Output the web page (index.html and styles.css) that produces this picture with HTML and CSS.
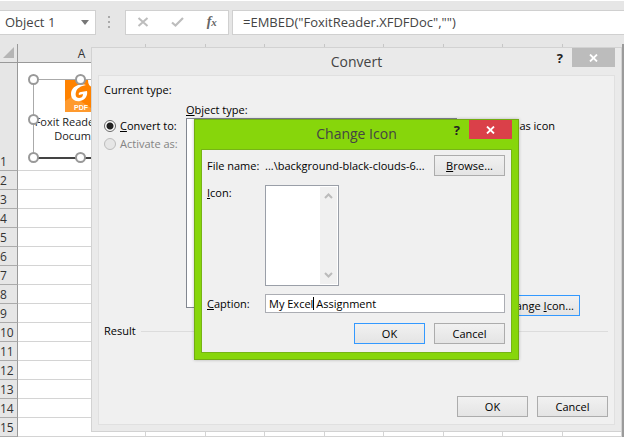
FILE: index.html
```html
<!DOCTYPE html>
<html lang="en">
<head>
    <meta charset="UTF-8">
    <meta name="viewport" content="width=device-width, initial-scale=1">
    <title>Change Icon</title>
    <link rel="stylesheet" href="styles.css">
</head>
<body>
<div class="workbook">
    <div class="formula-bar">
        <button type="button" class="name-box">Object 1
            <svg width="8" height="5" viewBox="0 0 8 5"><path d="M0 0h8L4 5z" fill="#777"/></svg>
        </button>
        <svg class="grip" width="3" height="12" viewBox="0 0 3 12"><path d="M0 0h2v2H0zM0 5h2v2H0zM0 10h2v2H0z" fill="#aaa"/></svg>
        <div class="formula-tools">
            <button type="button" aria-label="Cancel entry">
                <svg width="12" height="10" viewBox="0 0 12 10"><path d="M1.500 1l9 8M10.500 1l-9 8" stroke="#bdbdbd" stroke-width="2" fill="none"/></svg>
            </button>
            <button type="button" aria-label="Enter">
                <svg width="13" height="10" viewBox="0 0 13 10"><path d="M1 5.500l3.500 3L12 1" stroke="#bdbdbd" stroke-width="2.200" fill="none"/></svg>
            </button>
            <button type="button" class="fx">f<span>x</span></button>
        </div>
        <input type="text" class="formula" aria-label="Formula" value='=EMBED("FoxitReader.XFDFDoc","")'>
    </div>

    <table class="sheet">
        <thead>
            <tr>
                <th class="corner"><svg width="11" height="11" viewBox="0 0 11 11"><path d="M11 0v11H0z" fill="#b5b5b5"/></svg></th>
                <th class="col-a">A</th>
                <th></th><th></th><th></th><th></th><th></th><th></th><th></th><th class="col-last"></th>
            </tr>
        </thead>
        <tbody>
            <tr class="tall">
                <th>1</th>
                <td>
                    <div class="object">
                        <svg class="object-icon" width="32" height="32" viewBox="0 0 32 32">
                            <path d="M0 0h32v32H0z" fill="#ff8200"/>
                            <path d="M0 21l8-5 24 16H0z" fill="#ff9a2e"/>
                            <path d="M23 0h9v7h-4q-5 0-5-7z" fill="#fff"/>
                            <path d="M21 5C12 3 6 8 6 14c0 5 4 8 9 7 5-1 8-5 7-10l-6 1c-2 0-3 2-2 3l4-1c0 3-2 4-4 4-3 0-4-3-3-6 1-4 5-6 10-7z" fill="#fff"/>
                            <text x="9" y="30" class="pdf">PDF</text>
                        </svg>
                        <p>Foxit Reader XFDF<br>Document</p>
                        <i class="handle top left"></i><i class="handle top mid"></i>
                        <i class="handle half left"></i>
                        <i class="handle bottom left"></i><i class="handle bottom mid"></i>
                    </div>
                </td>
                <td></td><td></td><td></td><td></td><td></td><td></td><td></td><td></td>
            </tr>
            <tr><th>2</th><td></td><td></td><td></td><td></td><td></td><td></td><td></td><td></td><td></td></tr>
            <tr><th>3</th><td></td><td></td><td></td><td></td><td></td><td></td><td></td><td></td><td></td></tr>
            <tr><th>4</th><td></td><td></td><td></td><td></td><td></td><td></td><td></td><td></td><td></td></tr>
            <tr><th>5</th><td></td><td></td><td></td><td></td><td></td><td></td><td></td><td></td><td></td></tr>
            <tr><th>6</th><td></td><td></td><td></td><td></td><td></td><td></td><td></td><td></td><td></td></tr>
            <tr><th>7</th><td></td><td></td><td></td><td></td><td></td><td></td><td></td><td></td><td></td></tr>
            <tr><th>8</th><td></td><td></td><td></td><td></td><td></td><td></td><td></td><td></td><td></td></tr>
            <tr><th>9</th><td></td><td></td><td></td><td></td><td></td><td></td><td></td><td></td><td></td></tr>
            <tr><th>10</th><td></td><td></td><td></td><td></td><td></td><td></td><td></td><td></td><td></td></tr>
            <tr><th>11</th><td></td><td></td><td></td><td></td><td></td><td></td><td></td><td></td><td></td></tr>
            <tr><th>12</th><td></td><td></td><td></td><td></td><td></td><td></td><td></td><td></td><td></td></tr>
            <tr><th>13</th><td></td><td></td><td></td><td></td><td></td><td></td><td></td><td></td><td></td></tr>
            <tr><th>14</th><td></td><td></td><td></td><td></td><td></td><td></td><td></td><td></td><td></td></tr>
            <tr><th>15</th><td></td><td></td><td></td><td></td><td></td><td></td><td></td><td></td><td></td></tr>
        </tbody>
    </table>

    <!-- Convert window -->
    <form class="window convert">
        <div class="titlebar">
            <h2>Convert</h2>
            <button type="button" class="help">?</button>
            <button type="button" class="close" aria-label="Close">
                <svg width="9" height="8" viewBox="0 0 9 8"><path d="M1 .5l7 7M8 .5l-7 7" stroke="#fff" stroke-width="1.800"/></svg>
            </button>
        </div>
        <div class="client">
            <p>Current type:</p>
            <div class="convert-grid">
                <div class="modes">
                    <label><input type="radio" name="mode" checked><span><u>C</u>onvert to:</span></label>
                    <label class="off"><input type="radio" name="mode" disabled><span>Activate as:</span></label>
                </div>
                <div class="types">
                    <label for="types"><u>O</u>bject type:</label>
                    <select id="types" size="8"></select>
                </div>
                <div class="display">
                    <label><input type="checkbox" checked><span>Display as icon</span></label>
                    <button type="button" class="btn active">Change <u>I</u>con...</button>
                </div>
            </div>
            <div class="result"><span>Result</span></div>
            <div class="actions">
                <button type="button" class="btn">OK</button>
                <button type="button" class="btn">Cancel</button>
            </div>
        </div>
    </form>

    <!-- Change Icon window -->
    <form class="window change">
        <div class="titlebar">
            <h2>Change Icon</h2>
            <button type="button" class="help">?</button>
            <button type="button" class="close" aria-label="Close">
                <svg width="9" height="8" viewBox="0 0 9 8"><path d="M1 .5l7 7M8 .5l-7 7" stroke="#fff" stroke-width="1.800"/></svg>
            </button>
        </div>
        <div class="client">
            <div class="field">
                <span class="name">File name:</span>
                <span class="path">...\background-black-clouds-6...</span>
                <button type="button" class="btn"><u>B</u>rowse...</button>
            </div>
            <div class="field icons">
                <label class="name" for="icons"><u>I</u>con:</label>
                <div class="icon-list">
                    <select id="icons" size="5"></select>
                    <div class="scroll">
                        <svg width="9" height="6" viewBox="0 0 9 6"><path d="M1 5l3.500-3.500L8 5" stroke="#bbb" stroke-width="2" fill="none"/></svg>
                        <svg width="9" height="6" viewBox="0 0 9 6"><path d="M1 1l3.500 3.500L8 1" stroke="#bbb" stroke-width="2" fill="none"/></svg>
                    </div>
                </div>
            </div>
            <div class="field">
                <label class="name" for="caption"><u>C</u>aption:</label>
                <div class="caption">
                    <input type="text" id="caption" value="My Excel Assignment">
                    <i class="caret"></i>
                </div>
            </div>
            <div class="actions">
                <button type="button" class="btn active">OK</button>
                <button type="button" class="btn">Cancel</button>
            </div>
        </div>
    </form>
</div>
</body>
</html>
```
FILE: styles.css
```css
* {
    box-sizing: border-box;
}
body {
    margin: 1px 12px 0 0;
    background-color: #fff;
    color: #000;
    font-family: "Open Sans", "Noto Sans", sans-serif;
    font-size: 11px;
    line-height: 16px;
}
button, input, select {
    font: inherit;
    color: inherit;
}
button {
    padding: 0;
    border: none;
    background: none;
}
p, h2 {
    margin: 0;
    font-weight: normal;
}
.workbook {
    position: relative;
    background-color: #e6e6e6;
}

/* formula bar */
.formula-bar {
    display: flex;
    align-items: center;
    height: 43px;
    padding: 8px 0 9px;
    color: #444;
    font-size: 13px;
}
.name-box {
    display: flex;
    align-items: center;
    justify-content: space-between;
    width: 96px;
    height: 25px;
    padding: 0 6px 0 5px;
    border: 1px solid #d0d0d0;
    border-left: none;
    background-color: #fff;
}
.grip {
    margin: 0 14px 0 12px;
}
.formula-tools {
    display: flex;
    align-items: center;
    justify-content: space-around;
    width: 104px;
    height: 25px;
    margin-right: 3px;
    border: 1px solid #d0d0d0;
    background-color: #fff;
}
.formula-tools svg {
    display: block;
}
.fx {
    font: italic bold 14px/20px "Liberation Serif", serif;
    color: #666;
}
.fx span {
    font-size: 11px;
}
.formula {
    flex: 1;
    min-width: 0;
    height: 25px;
    padding: 0 10px;
    border: 1px solid #d0d0d0;
    border-right: none;
    background-color: #fff;
}

/* sheet */
.sheet {
    width: 100%;
    table-layout: fixed;
    border-collapse: separate;
    border-spacing: 0;
    border-right: 2px solid #9b9b9b;
    background-color: #fff;
}
.sheet th {
    height: 19px;
    padding: 0;
    border-right: 1px solid #999;
    border-bottom: 1px solid #ababab;
    background-color: #e6e6e6;
    color: #333;
    font-size: 12px;
    font-weight: normal;
    line-height: 16px;
    text-align: left;
    vertical-align: bottom;
}
.sheet thead th {
    border-right-color: #c6c6c6;
    border-bottom-color: #999;
    text-align: center;
}
.sheet .corner {
    width: 18px;
    border-right-color: #999;
}
.corner svg {
    display: block;
    margin: 0 0 4px 3px;
}
.sheet .col-a {
    width: 128px;
}
.sheet thead .col-last {
    border-right: none;
}
.sheet td {
    padding: 0;
    border-right: 1px solid #d4d4d4;
    border-bottom: 1px solid #d4d4d4;
    vertical-align: top;
}
.sheet .tall th {
    height: 108px;
}
.object {
    position: relative;
    height: 80px;
    margin: 16px 16px 0 15px;
    border: 1px solid #aaa;
    border-bottom: 2px solid #444;
    color: #222;
    line-height: 14px;
    text-align: center;
    white-space: nowrap;
}
.object-icon {
    display: block;
    margin: 0 auto 3px;
}
.pdf {
    font: bold 7px "Liberation Sans", sans-serif;
    fill: #fff;
}
.handle {
    position: absolute;
    width: 11px;
    height: 11px;
    border: 2px solid #999;
    border-radius: 50%;
    background-color: #fff;
}
.handle.left { left: -6px; }
.handle.mid { left: calc(50% - 6px); }
.handle.top { top: -6px; }
.handle.half { top: 34px; }
.handle.bottom { bottom: -6px; }

/* windows */
.window {
    position: absolute;
    display: flex;
    flex-direction: column;
    border: 1px solid #d2d2d2;
    background-color: #eaeaea;
}
.titlebar {
    display: grid;
    grid-template-columns: 1fr auto 43px;
    align-items: start;
    height: 27px;
    color: #444;
}
.titlebar h2 {
    grid-area: 1 / 1 / 2 / 4;
    font-size: 14px;
    line-height: 28px;
    text-align: center;
}
.help {
    grid-area: 1 / 2;
    padding-right: 9px;
    color: #222;
    font-size: 13px;
    font-weight: bold;
    line-height: 20px;
}
.close {
    grid-area: 1 / 3;
    height: 19px;
    background-color: #bcbcbc;
}
.client {
    flex: 1;
    display: flex;
    flex-direction: column;
    border: 1px solid #e0e0e0;
    background-color: #f0f0f0;
}
.actions {
    display: flex;
    justify-content: flex-end;
    gap: 9px;
}
.btn {
    width: 71px;
    height: 21px;
    border: 1px solid #acacac;
    background: linear-gradient(#f1f1f1, #e4e4e4);
    line-height: 18px;
    text-align: center;
}
.btn.active {
    border-color: #3399ff;
}
select {
    display: block;
    width: 100%;
    padding: 0;
    border: 1px solid #828790;
    border-radius: 0;
    outline: none;
    background-color: #fff;
    overflow: hidden;
}

.convert {
    top: 46px;
    right: 2px;
    bottom: 5px;
    left: 91px;
    padding: 0 6px 6px;
}
.convert .client {
    padding: 6px 6px 7px 5px;
}
.convert-grid {
    display: grid;
    grid-template-columns: 82px 271px 1fr;
    margin-top: 4px;
}
.modes {
    padding-top: 15px;
}
.modes label, .display label {
    display: flex;
    align-items: center;
    gap: 4px;
    height: 18px;
}
.modes .off {
    color: #838383;
}
input[type=radio] {
    appearance: none;
    width: 12px;
    height: 12px;
    margin: 0;
    border: 1px solid #666;
    border-radius: 50%;
    background-color: #fff;
}
input[type=radio]:checked {
    background: radial-gradient(circle, #222 0 3px, #fff 4px);
}
input[type=radio]:disabled {
    border-color: #bcbcbc;
    background-color: #e6e6e6;
}
.types label {
    display: block;
}
.types select {
    height: 190px;
}
.display {
    display: flex;
    flex-direction: column;
    justify-content: space-between;
    padding: 15px 28px 0 0;
}
.display label {
    justify-content: flex-end;
    padding-right: 25px;
}
.display input {
    width: 13px;
    height: 13px;
    margin: 0;
}
.display .btn {
    align-self: flex-end;
    width: 84px;
    margin-bottom: -8px;
}
.result {
    display: flex;
    align-items: center;
    gap: 5px;
    margin-top: 15px;
}
.result::after {
    content: "";
    flex: 1;
    border-top: 1px solid #dcdcdc;
}
.convert .actions {
    margin-top: auto;
}

.change {
    top: 118px;
    left: 194px;
    width: 325px;
    padding: 0 6px 6px;
    border-color: #72ac12;
    background-color: #87d60b;
    box-shadow: 0 0 3px rgba(0, 0, 0, 0.25);
}
.change .titlebar {
    height: 29px;
}
.change .close {
    background-color: #da4049;
}
.change .client {
    padding: 5px 6px 8px 5px;
    border-color: #76b416;
}
.field {
    display: grid;
    grid-template-columns: 58px 1fr auto;
    align-items: center;
}
.field.icons {
    align-items: start;
    margin: 9px 0 8px;
}
.icon-list {
    display: flex;
    width: 74px;
    height: 101px;
    padding: 1px;
    border: 1px solid #9a9fa8;
    background-color: #fff;
}
.icon-list select {
    flex: 1;
    min-width: 0;
    border: none;
}
.scroll {
    display: flex;
    flex-direction: column;
    align-items: center;
    justify-content: space-between;
    width: 17px;
    padding: 6px 0;
    background-color: #f0f0f0;
}
.caption {
    position: relative;
    grid-column: 2 / 4;
}
.caption input {
    display: block;
    width: 100%;
    height: 19px;
    padding: 0 3px;
    border: 1px solid #abadb3;
    background-color: #fff;
}
.caret {
    position: absolute;
    top: 3px;
    left: 48px;
    width: 1px;
    height: 13px;
    background-color: #000;
}
.change .actions {
    margin-top: 10px;
}
```
